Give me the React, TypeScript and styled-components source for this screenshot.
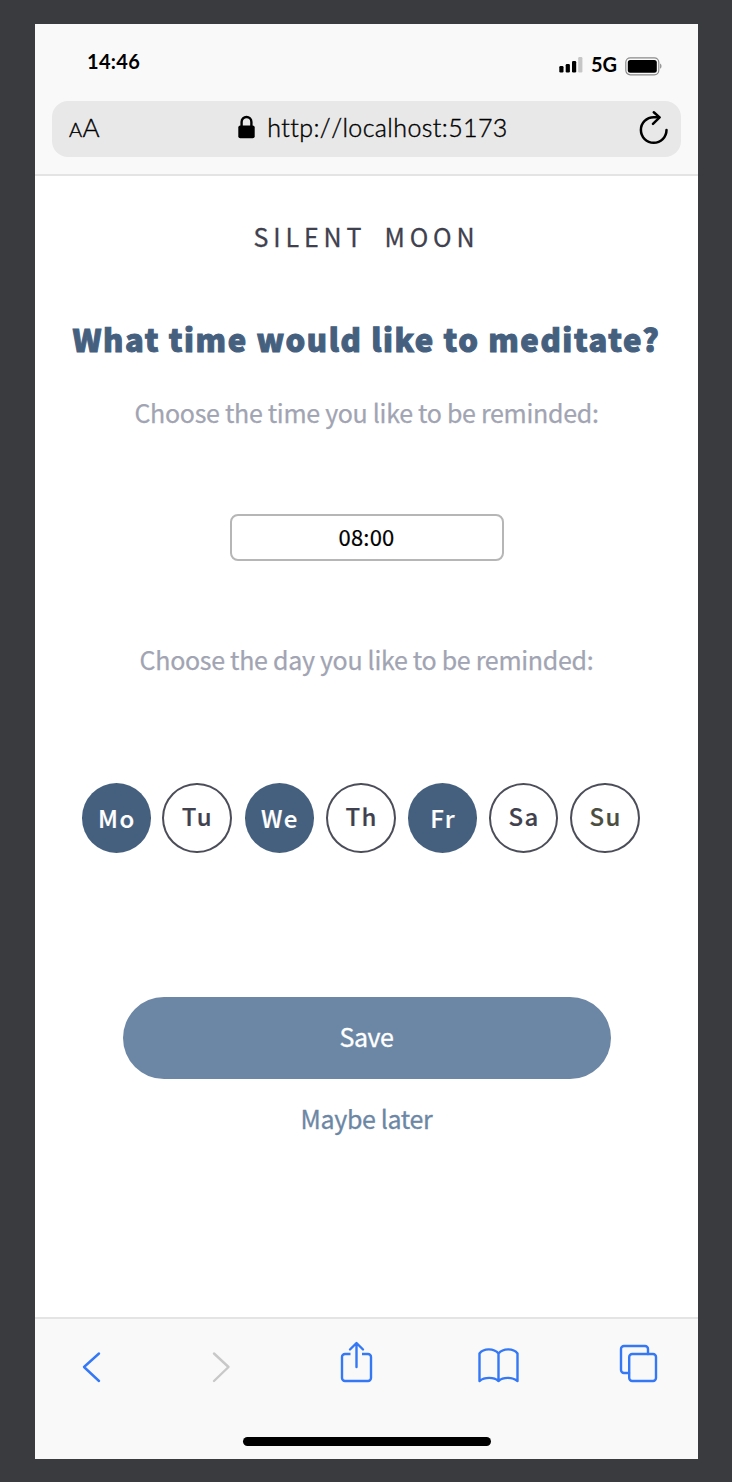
import React from "react";
import styled, { createGlobalStyle } from "styled-components";

const GlobalStyle = createGlobalStyle`
  *, *::before, *::after { box-sizing: border-box; }
  html, body { margin: 0; padding: 0; background: #3a3b3f; }
  button, input { margin: 0; padding: 0; font: inherit; }
`;

const sans = `"Noto Sans CJK JP", "Noto Sans", sans-serif`;
const system = `Lato, "Open Sans", sans-serif`;

const Stage = styled.div`
  width: 732px;
  height: 1482px;
  padding: 24px 34px 23px 35px;
  background: #3a3b3f;
  overflow: hidden;
`;

const Phone = styled.div`
  display: flex;
  flex-direction: column;
  height: 1435px;
  background: #fff;
`;

const Header = styled.header`
  flex: none;
  height: 151.5px;
  background: #f9f9f9;
  border-bottom: 2px solid #e4e4e4;
  font-family: ${system};
  color: #000;
`;

const StatusBar = styled.div`
  display: flex;
  align-items: flex-start;
  justify-content: space-between;
  height: 76.5px;
  padding: 26px 36px 0 52px;
`;

const Clock = styled.span`
  font-size: 20px;
  font-weight: 700;
  line-height: 23px;
  letter-spacing: 0.3px;
`;

const Signals = styled.div`
  display: flex;
  align-items: flex-start;
`;

const Network = styled.span`
  margin: 2px 8px 0 8px;
  font-size: 20px;
  font-weight: 700;
  line-height: 24px;
`;

const StatusIcon = styled.svg`
  display: block;
  margin-top: 4px;
`;

const AddressBar = styled.div`
  display: flex;
  align-items: center;
  justify-content: space-between;
  height: 56px;
  margin: 0 17px;
  padding: 0 12px 0 17px;
  border-radius: 16px;
  background: #e8e8e8;
`;

const TextSize = styled.span`
  width: 38px;
  padding-bottom: 2px;
  font-size: 26px;
  font-weight: 300;
  line-height: 30px;
  letter-spacing: 0.4px;
  -webkit-text-stroke: 0.4px #000;
  small { font-size: 20px; }
`;

const Address = styled.div`
  display: flex;
  align-items: center;
  gap: 12px;
  padding-bottom: 3px;
  font-size: 25px;
  font-weight: 300;
  line-height: 30px;
  letter-spacing: 0.4px;
  font-variant-ligatures: none;
  font-kerning: none;
  -webkit-text-stroke: 0.4px #000;
`;

const Main = styled.main`
  flex: 1;
  display: flex;
  flex-direction: column;
  align-items: center;
  padding-top: 42px;
  font-family: ${sans};
  white-space: nowrap;
`;

const Brand = styled.div`
  font-size: 25px;
  line-height: 36px;
  letter-spacing: 4.9px;
  word-spacing: 7.5px;
  color: #3f414e;
  -webkit-text-stroke: 0.3px #3f414e;
`;

const Heading = styled.h1`
  margin: 63.5px 0 0;
  font-size: 31px;
  font-weight: 900;
  line-height: 44px;
  letter-spacing: 1.58px;
  color: #45607f;
  -webkit-text-stroke: 1px #45607f;
`;

const Prompt = styled.p<{ $top: number }>`
  margin: ${(p) => p.$top}px 0 0;
  font-size: 25px;
  line-height: 36px;
  letter-spacing: -0.3px;
  color: #a1a4b2;
  -webkit-text-stroke: 0.25px #a1a4b2;
`;

const TimeInput = styled.input`
  width: 274px;
  height: 47px;
  margin-top: 84px;
  padding-bottom: 3px;
  border: 2px solid #b6b6b6;
  border-radius: 8px;
  background: #fff;
  color: #000;
  font-family: ${sans};
  font-size: 22px;
  letter-spacing: 0.2px;
  text-align: center;
  -webkit-text-stroke: 0.2px #000;
`;

const Days = styled.div`
  display: flex;
  align-self: flex-start;
  margin: 106px 0 0 46.7px;
`;

const Day = styled.button<{ $on?: boolean; $gap: number; $ink?: string }>`
  width: 69.5px;
  height: 70px;
  margin-right: ${(p) => p.$gap}px;
  padding: 0 0 ${(p) => (p.$on ? 1 : 5)}px 1px;
  border: ${(p) => (p.$on ? "none" : "2px solid #4b4d59")};
  border-radius: 50%;
  background: ${(p) => (p.$on ? "#45607f" : "#fff")};
  color: ${(p) => (p.$on ? "#fff" : p.$ink ?? "#3f414e")};
  font-family: ${sans};
  font-size: 24px;
  font-weight: 500;
  letter-spacing: 1.5px;
  line-height: 36px;
  -webkit-text-stroke: 0.2px currentColor;
`;

const Save = styled.button`
  width: 488px;
  height: 82px;
  margin-top: 144px;
  padding-bottom: 4px;
  border: none;
  border-radius: 41px;
  background: #6c87a5;
  color: #fff;
  font-family: ${sans};
  font-size: 25px;
  line-height: 36px;
  letter-spacing: -0.4px;
  -webkit-text-stroke: 0.3px #fff;
`;

const Later = styled.a`
  margin-top: 21px;
  font-size: 25px;
  line-height: 36px;
  letter-spacing: -0.35px;
  color: #6c87a5;
  -webkit-text-stroke: 0.3px #6c87a5;
`;

const Footer = styled.footer`
  flex: none;
  display: flex;
  flex-direction: column;
  height: 142px;
  padding-top: 21px;
  background: #f9f9f9;
  border-top: 2px solid #e4e4e4;
`;

const Toolbar = styled.nav`
  display: grid;
  grid-template-columns: 129px 129px 137px 142px 40px;
  height: 44px;
  padding-left: 47px;
`;

const ToolIcon = styled.svg<{ $muted?: boolean }>`
  display: block;
  fill: none;
  stroke: ${(p) => (p.$muted ? "#c8c8c8" : "#3478f6")};
  stroke-width: 2.4;
  stroke-linecap: round;
  stroke-linejoin: round;
`;

const HomeIndicator = styled.div`
  width: 248px;
  height: 9px;
  margin: 52.5px 0 0 207.5px;
  border-radius: 5px;
  background: #000;
`;

const days = [
  { label: "Mo", on: true, gap: 11 },
  { label: "Tu", gap: 13 },
  { label: "We", on: true, gap: 12.3 },
  { label: "Th", gap: 12 },
  { label: "Fr", on: true, gap: 11.5 },
  { label: "Sa", gap: 12 },
  { label: "Su", gap: 0, ink: "#4b4e3f" },
];

export default function App() {
  return (
    <Stage>
      <GlobalStyle />
      <Phone>
        <Header>
          <StatusBar>
            <Clock>14:46</Clock>
            <Signals>
              <StatusIcon width="24" height="22" viewBox="0 0 24 22">
                <rect x="0.3" y="12" width="4.2" height="6.5" rx="1.2" />
                <rect x="6.7" y="10" width="4.2" height="8.5" rx="1.2" />
                <rect x="13" y="7" width="4.2" height="11.5" rx="1.2" />
                <rect x="19.2" y="3" width="4.2" height="15.5" rx="1.2" fill="#c6c6c6" />
              </StatusIcon>
              <Network>5G</Network>
              <StatusIcon width="37" height="22" viewBox="0 0 37 22">
                <rect x="0.8" y="3.8" width="33" height="17" rx="4.5" fill="none" stroke="#8a8a8a" strokeWidth="1.2" />
                <rect x="2.8" y="6" width="29" height="12.8" rx="2.5" />
                <path d="M35 9.5c2 1 2 4.3 0 5.3z" fill="#999" />
              </StatusIcon>
            </Signals>
          </StatusBar>
          <AddressBar>
            <TextSize><small>A</small>A</TextSize>
            <Address>
              <svg width="17" height="24" viewBox="0 0 17 24">
                <rect x="0.3" y="10.5" width="16.4" height="12.8" rx="2" />
                <path d="M3.6 11.5V6.9a4.9 4.9 0 0 1 9.8 0V11.500" fill="none" stroke="#000" strokeWidth="2.4" />
              </svg>
              <span>http://localhost:5173</span>
            </Address>
            <svg width="30" height="36" viewBox="0 0 30 36" fill="none" stroke="#000" strokeWidth="2.5" strokeLinecap="round" strokeLinejoin="round">
              <path d="M27.500 19A12.800 12.800 0 1 1 14.700 6.200H20" />
              <path d="M14.800 1.300L20.600 6.400L14 12.800" />
            </svg>
          </AddressBar>
        </Header>

        <Main>
          <Brand>SILENT MOON</Brand>
          <Heading>What time would like to meditate?</Heading>
          <Prompt $top={33}>Choose the time you like to be reminded:</Prompt>
          <TimeInput type="text" defaultValue="08:00" />
          <Prompt $top={80}>Choose the day you like to be reminded:</Prompt>
          <Days>
            {days.map((d) => (
              <Day key={d.label} $on={d.on} $gap={d.gap} $ink={d.ink}>{d.label}</Day>
            ))}
          </Days>
          <Save>Save</Save>
          <Later>Maybe later</Later>
        </Main>

        <Footer>
          <Toolbar>
            <ToolIcon width="20" height="44" viewBox="0 0 20 44">
              <path d="M17 13.5L2 27L17 41" />
            </ToolIcon>
            <ToolIcon $muted width="20" height="44" viewBox="0 0 20 44">
              <path d="M3 13.5L17.5 27L3 41" />
            </ToolIcon>
            <ToolIcon width="34" height="44" viewBox="0 0 34 44">
              <path d="M10.5 14H5a3 3 0 0 0-3 3V38a3 3 0 0 0 3 3H28a3 3 0 0 0 3-3V17a3 3 0 0 0-3-3H22" strokeLinecap="butt" />
              <path d="M16.5 27V3.5M10 9.5L16.5 3L23 9.5" />
            </ToolIcon>
            <ToolIcon width="43" height="44" viewBox="0 0 43 44">
              <path d="M2.5 41V13.5C6.5 8 17 8 21.5 13.5C26 8 36.5 8 40.5 13.5V41C35.5 36.8 26 36.8 21.5 41C17 36.8 7.5 36.8 2.5 41ZM21.5 13.5V41" />
            </ToolIcon>
            <ToolIcon width="40" height="44" viewBox="0 0 40 44">
              <path d="M29 14V9a3 3 0 0 0-3-3H5a3 3 0 0 0-3 3V30a3 3 0 0 0 3 3H10" />
              <rect x="10.2" y="14" width="26.8" height="27" rx="3" />
            </ToolIcon>
          </Toolbar>
          <HomeIndicator />
        </Footer>
      </Phone>
    </Stage>
  );
}
